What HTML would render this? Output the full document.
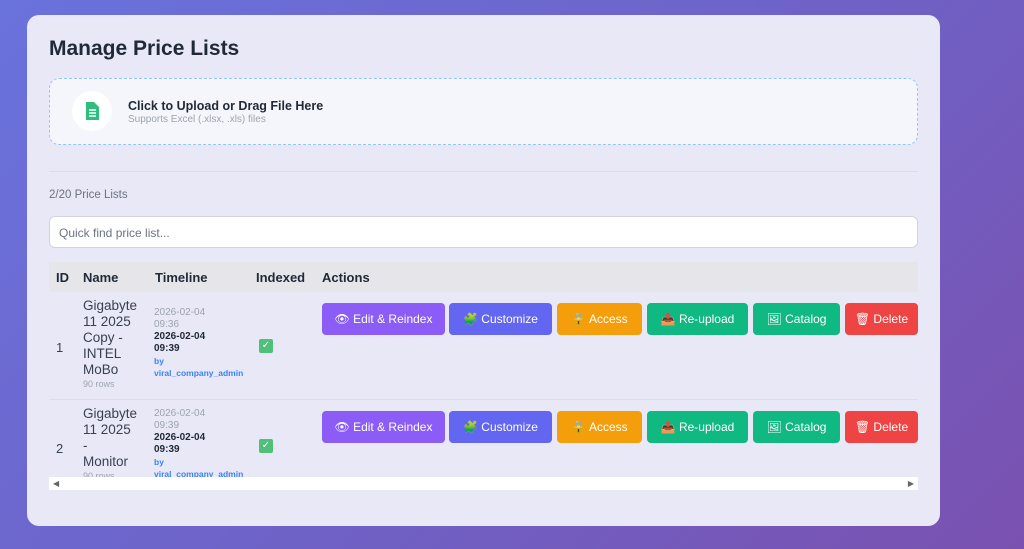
<!DOCTYPE html>
<html><head><style>
*{box-sizing:border-box;margin:0;padding:0}
body{width:1024px;height:549px;overflow:hidden;font-family:"Liberation Sans",sans-serif;background:linear-gradient(135deg,#6a72dc 0%,#6e63c8 50%,#7a51b0 100%);position:relative}
.card{position:absolute;left:27px;top:15px;width:913px;height:511px;background:#e9e8f6;border-radius:12px}
h1{position:absolute;left:22px;top:22px;font-size:21px;font-weight:700;color:#1f2937}
.up{position:absolute;left:22px;top:63px;width:869px;height:67px;border:1px dashed #93c5fd;border-radius:10px;background:#f5f6fb}
.ic{position:absolute;left:22px;top:12px;width:40px;height:40px;border-radius:50%;background:#fff}
.up b{position:absolute;left:78px;top:20px;font-size:12.5px;color:#1f2937}
.up small{position:absolute;left:78px;top:35px;font-size:10px;color:#9ca3af}
.hr{position:absolute;left:22px;top:156px;width:869px;height:1px;background:#dcdcec}
.cnt{position:absolute;left:22px;top:174px;font-size:11.5px;color:#6b7280}
.srch{position:absolute;left:22px;top:201px;width:869px;height:32px;border:1px solid #d1d5db;border-radius:6px;background:#fff;font-size:12px;color:#6b7280;padding:9px 9px}
.th{position:absolute;left:22px;top:247px;width:869px;height:30px;background:#e5e5ea}
.th span{position:absolute;top:8px;font-size:13px;font-weight:700;color:#1f2937}
.row{position:absolute;left:22px;width:869px}
.sep{position:absolute;left:22px;top:384px;width:869px;height:1px;background:#dddde8}
.id{position:absolute;left:7px;font-size:13px;color:#374151}
.nm{position:absolute;left:34px;font-size:13.5px;line-height:16px;color:#374151;width:60px}
.nm i{display:block;font-style:normal;font-size:9px;color:#9ca3af;line-height:12px}
.tl{position:absolute;left:105px;font-size:10px;line-height:12px;color:#9ca3af}
.tl b{display:block;color:#1f2937}
.tl u{display:block;text-decoration:none;color:#3b82f6;font-weight:700;font-size:8.5px}
.chk{position:absolute;left:210px;width:14px;height:14px;background:#4fbf7a;border-radius:2px;color:#fff;font-size:10px;text-align:center;line-height:14px}
.btn{position:absolute;height:32px;border-radius:4px;color:#fff;font-size:12px;text-align:center;line-height:32px}
.sb{position:absolute;left:22px;top:462px;width:869px;height:13px;background:#fff}
.clip{position:absolute;left:0;top:0;width:913px;height:462px;overflow:hidden}
</style></head><body>
<div class="card">
<h1>Manage Price Lists</h1>
<div class="up"><div class="ic"><svg width="40" height="40" viewBox="0 0 40 40"><path d="M14 11h8l5 5v13h-13z" fill="#2dbd7e"/><path d="M17 19h7M17 22h7M17 25h7" stroke="#fff" stroke-width="1.4"/></svg></div><b>Click to Upload or Drag File Here</b><small>Supports Excel (.xlsx, .xls) files</small></div>
<div class="hr"></div>
<div class="cnt">2/20 Price Lists</div>
<div class="srch">Quick find price list...</div>
<div class="th"><span style="left:7px">ID</span><span style="left:34px">Name</span><span style="left:106px">Timeline</span><span style="left:207px">Indexed</span><span style="left:273px">Actions</span></div>
<div class="clip">
<div class="row" style="top:277px">
<div class="id" style="top:48px">1</div>
<div class="nm" style="top:6px">Gigabyte<br>11 2025<br>Copy -<br>INTEL<br>MoBo<i>90 rows</i></div>
<div class="tl" style="top:15px">2026-02-04<br>09:36<b>2026-02-04<br>09:39</b><u>by<br>viral_company_admin</u></div>
<div class="chk" style="top:47px">✓</div>
</div>
<div class="row" style="top:385px">
<div class="id" style="top:41px">2</div>
<div class="nm" style="top:6px">Gigabyte<br>11 2025<br>-<br>Monitor<i>90 rows</i></div>
<div class="tl" style="top:8px">2026-02-04<br>09:39<b>2026-02-04<br>09:39</b><u>by<br>viral_company_admin</u></div>
<div class="chk" style="top:39px">✓</div>
</div>
</div>
<div class="sep"></div>
<div class="btn" style="left:295px;top:288px;width:123px;background:#8b5cf6">👁 Edit &amp; Reindex</div>
<div class="btn" style="left:422px;top:288px;width:103px;background:#6366f1">🧩 Customize</div>
<div class="btn" style="left:530px;top:288px;width:85px;background:#f59e0b">🔒 Access</div>
<div class="btn" style="left:620px;top:288px;width:101px;background:#10b981">📤 Re-upload</div>
<div class="btn" style="left:726px;top:288px;width:87px;background:#10b981">🖼 Catalog</div>
<div class="btn" style="left:818px;top:288px;width:73px;background:#ef4444">🗑 Delete</div>
<div class="btn" style="left:295px;top:396px;width:123px;background:#8b5cf6">👁 Edit &amp; Reindex</div>
<div class="btn" style="left:422px;top:396px;width:103px;background:#6366f1">🧩 Customize</div>
<div class="btn" style="left:530px;top:396px;width:85px;background:#f59e0b">🔒 Access</div>
<div class="btn" style="left:620px;top:396px;width:101px;background:#10b981">📤 Re-upload</div>
<div class="btn" style="left:726px;top:396px;width:87px;background:#10b981">🖼 Catalog</div>
<div class="btn" style="left:818px;top:396px;width:73px;background:#ef4444">🗑 Delete</div>
<div class="sb"><span style="position:absolute;left:4px;top:2px;font-size:8px;color:#666">◀</span><span style="position:absolute;right:4px;top:2px;font-size:8px;color:#666">▶</span></div>
</div>
</body></html>
